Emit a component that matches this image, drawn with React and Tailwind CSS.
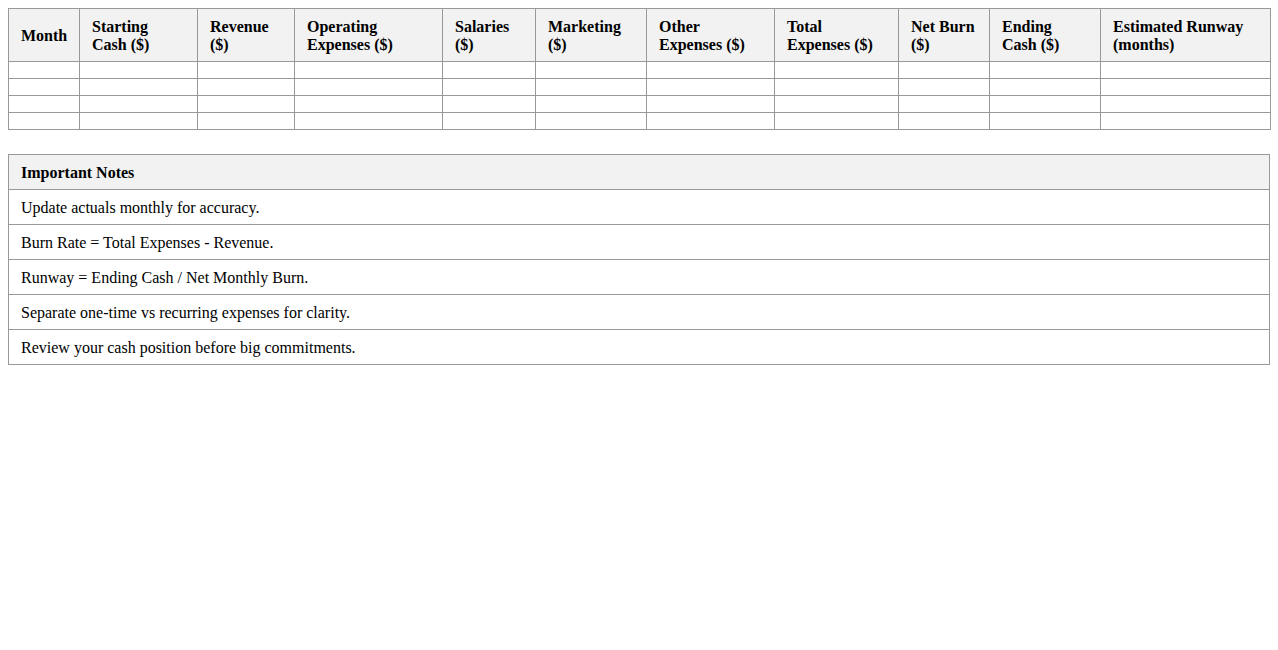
import React from 'react';

const columns = [
  { label: ['Month'], w: 'w-[71px]' },
  { label: ['Starting', 'Cash ($)'], w: 'w-[118px]' },
  { label: ['Revenue', '($)'], w: 'w-[97px]' },
  { label: ['Operating', 'Expenses ($)'], w: 'w-[148px]' },
  { label: ['Salaries', '($)'], w: 'w-[93px]' },
  { label: ['Marketing', '($)'], w: 'w-[111px]' },
  { label: ['Other', 'Expenses ($)'], w: 'w-[128px]' },
  { label: ['Total', 'Expenses ($)'], w: 'w-[124px]' },
  { label: ['Net Burn', '($)'], w: 'w-[91px]' },
  { label: ['Ending', 'Cash ($)'], w: 'w-[111px]' },
  { label: ['Estimated Runway', '(months)'], w: 'w-[170px]' },
];

const notes = [
  'Update actuals monthly for accuracy.',
  'Burn Rate = Total Expenses - Revenue.',
  'Runway = Ending Cash / Net Monthly Burn.',
  'Separate one-time vs recurring expenses for clarity.',
  'Review your cash position before big commitments.',
];

export default function App() {
  return (
    <div className="p-2 bg-white text-black font-['Liberation_Serif','Times_New_Roman',serif] text-[16px] leading-[18px]">
      {/* Runway table */}
      <table className="w-[1262px] table-fixed border-collapse">
        <colgroup>
          {columns.map((c, i) => (
            <col key={i} className={c.w} />
          ))}
        </colgroup>
        <thead>
          <tr>
            {columns.map((c, i) => (
              <th
                key={i}
                className="border border-[#999] bg-[#f2f2f2] px-3 pt-[9px] pb-[7px] text-left align-middle font-bold"
              >
                {c.label.map((l, j) => (
                  <div key={j}>{l}</div>
                ))}
              </th>
            ))}
          </tr>
        </thead>
        <tbody>
          {[0, 1, 2, 3].map((r) => (
            <tr key={r}>
              {columns.map((c, i) => (
                <td key={i} className="border border-[#999] px-3 py-2 h-[17px]"></td>
              ))}
            </tr>
          ))}
        </tbody>
      </table>

      {/* Notes */}
      <table className="w-[1262px] border-collapse mt-6">
        <thead>
          <tr>
            <th className="border border-[#999] bg-[#f2f2f2] px-3 pt-[9px] pb-[7px] text-left font-bold">
              Important Notes
            </th>
          </tr>
        </thead>
        <tbody>
          {notes.map((n) => (
            <tr key={n}>
              <td className="border border-[#999] px-3 pt-[9px] pb-[7px]">{n}</td>
            </tr>
          ))}
        </tbody>
      </table>
    </div>
  );
}
